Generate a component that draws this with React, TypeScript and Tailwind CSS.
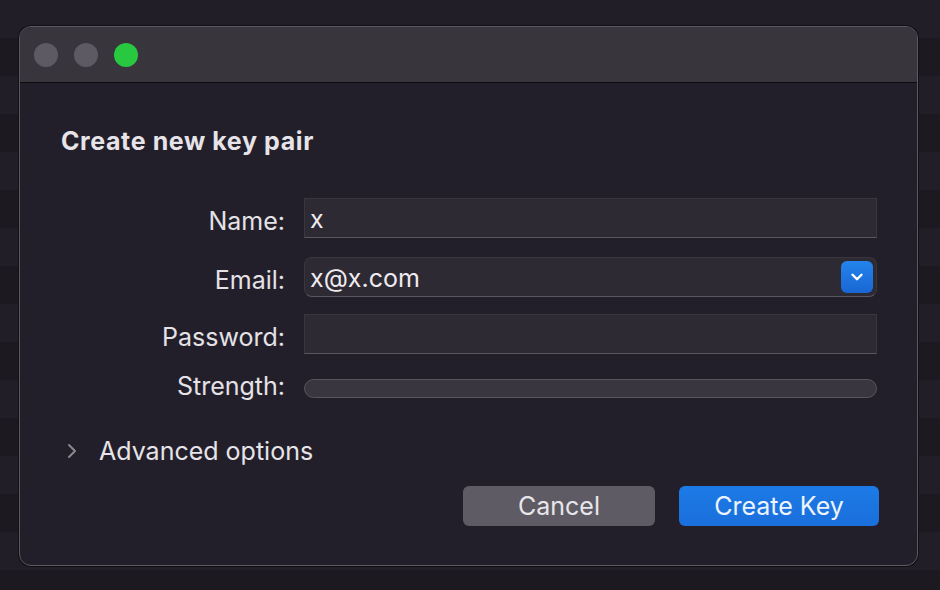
import { ChevronDown, ChevronRight } from "lucide-react";

const font = { fontFamily: "Inter, 'Noto Sans', sans-serif" };

function Field({ label, children, lower = true }: { label: string; children: React.ReactNode; lower?: boolean }) {
  return (
    <div className="flex items-center">
      <div
        className={`w-[225px] shrink-0 pr-[1px] text-right text-[25px] leading-[30px] text-[#e4e2e7] ${lower ? "pt-[6px]" : ""}`}
      >
        {label}
      </div>
      <div className="ml-[18px] flex-1">{children}</div>
    </div>
  );
}

export default function App() {
  return (
    <div
      style={font}
      className="h-[590px] w-[940px] overflow-hidden bg-[repeating-linear-gradient(180deg,#221e28_0px,#221e28_38px,#1c1920_38px,#1c1920_76px)] pt-[26px] pl-[19px]"
    >
      <div className="flex h-[540px] w-[899px] flex-col overflow-hidden rounded-[12px] border border-[#5c5962] bg-[#231f2a] shadow-[0_0_0_1px_#121015]">
        {/* Title bar */}
        <div className="flex h-[56px] shrink-0 items-center gap-[16px] border-b border-[#0c0b0e] bg-[#38353d] pl-[14px]">
          <span className="h-[24px] w-[24px] rounded-full bg-[#5d5a63]" />
          <span className="h-[24px] w-[24px] rounded-full bg-[#5d5a63]" />
          <span className="h-[24px] w-[24px] rounded-full bg-[#28c840]" />
        </div>

        <div className="flex flex-1 flex-col pl-[41px] pr-[40px]">
          <h1 className="mt-[44px] text-[25px] leading-[28px] font-bold tracking-[0.6px] text-[#e6e4e9]">Create new key pair</h1>

          <div className="mt-[43px] flex flex-col">
            <Field label="Name:">
              <div className="flex h-[40px] items-center border border-[#3a3640] border-b-[#5a5760] bg-[#2e2a34] px-[5px] pt-[3px] text-[25px] text-[#eeecf0]">
                x
              </div>
            </Field>
            <div className="mt-[19px]">
              <Field label="Email:">
                <div className="flex h-[40px] items-center justify-between rounded-[8px] border border-[#3a3640] border-b-[#5a5760] bg-[#2e2a34] pl-[5px] pr-[3px] text-[25px] text-[#eeecf0]">
                  <span className="pt-[3px]">x@x.com</span>
                  <span className="flex h-[32px] w-[32px] items-center justify-center rounded-[6px] bg-gradient-to-b from-[#2484ec] to-[#1966d4]">
                    <ChevronDown className="h-[18px] w-[18px] text-white" strokeWidth={3.2} />
                  </span>
                </div>
              </Field>
            </div>
            <div className="mt-[17px]">
              <Field label="Password:">
                <div className="h-[40px] border border-[#3a3640] border-b-[#5a5760] bg-[#2e2a34]" />
              </Field>
            </div>
            <div className="mt-[17px]">
              <Field label="Strength:" lower={false}>
                <div className="mt-[5px] h-[19px] rounded-full border border-[#58555d] bg-[#3a3640]" />
              </Field>
            </div>
          </div>

          <div className="mt-[35px] flex items-center">
            <ChevronRight className="ml-[-1px] h-[24px] w-[24px] text-[#8a878f]" strokeWidth={2} />
            <span className="ml-[15px] text-[25px] leading-[30px] text-[#e6e4e9]">Advanced options</span>
          </div>

          <div className="mt-[20px] flex justify-end gap-[24px]">
            <button className="h-[40px] w-[192px] rounded-[6px] bg-[#5f5b64] pt-[2px] text-[25px] text-[#e8e6ea]">Cancel</button>
            <button className="-mr-[2px] h-[40px] w-[200px] rounded-[6px] bg-gradient-to-b from-[#1c7ae6] to-[#1a6fdb] pt-[2px] text-[25px] text-[#eef4fd]">
              Create Key
            </button>
          </div>
        </div>
      </div>
    </div>
  );
}
